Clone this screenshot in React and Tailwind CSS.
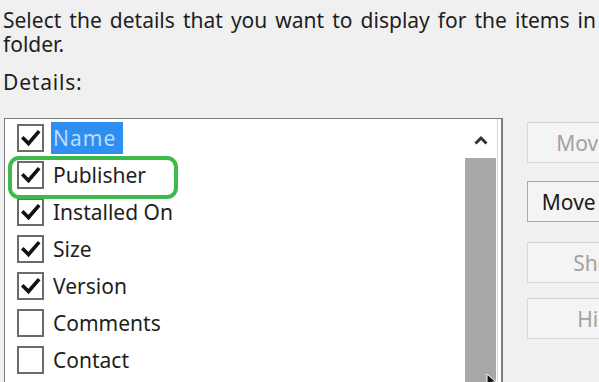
import React from "react";

const items = [
  { label: "Name", checked: true, selected: true },
  { label: "Publisher", checked: true },
  { label: "Installed On", checked: true },
  { label: "Size", checked: true },
  { label: "Version", checked: true },
  { label: "Comments", checked: false },
  { label: "Contact", checked: false },
  { label: "Date", checked: false },
];

function Check({ checked }) {
  return (
    <div className="w-[27px] h-[28px] shrink-0 border-2 border-[#6b6b6b] bg-white flex items-center justify-center">
      {checked && (
        <svg width="20" height="18" viewBox="0 0 20 18">
          <path d="M2.5 9.5 L7.5 14.5 L17 3.5" fill="none" stroke="#111" strokeWidth="3.6" strokeLinecap="square" strokeLinejoin="miter" />
        </svg>
      )}
    </div>
  );
}

function Btn({ label, enabled }) {
  return (
    <div
      className={
        "w-[146px] h-[41px] shrink-0 flex items-center justify-center border bg-[#f4f4f4] " +
        (enabled ? "border-[#a9a9a9] text-[#1b1b1b]" : "border-[#d6d6d6] text-[#a2a2a2]")
      }
    >
      {label}
    </div>
  );
}

export default function App() {
  return (
    <div
      className="w-[599px] h-[382px] overflow-hidden bg-[#f0f0f0] text-[#1e1e1e] text-[21px] leading-[24px]"
      style={{ fontFamily: '"Noto Sans", "Open Sans", sans-serif' }}
    >
      <div className="pl-[3px] pt-[8px] whitespace-nowrap">
        <div className="[word-spacing:2.6px]">Select the details that you want to display for the items in</div>
        <div>folder.</div>
        <div className="mt-[14px] tracking-[0.8px]">Details:</div>
      </div>
      <div className="flex mt-[24px]">
        <div className="ml-[4px] w-[499px] h-[300px] border border-[#7c7c7c] border-r-2 bg-white flex relative shrink-0">
          <div className="flex-1 flex flex-col pl-[12px] pt-0">
            {items.map((it) => (
              <div key={it.label} className="h-[37px] flex items-center shrink-0">
                <Check checked={it.checked} />
                <div
                  className={
                    "ml-[7px] h-[32px] flex items-center " +
                    (it.selected ? "bg-[#2f8ef2] text-[#b9dcff] tracking-[1px] pl-[2px] pr-[7px]" : "px-[2px]")
                  }
                >
                  {it.label}
                </div>
              </div>
            ))}
          </div>
          <div className="w-[34px] flex flex-col border-r border-[#d9d9d9] mr-[3px]">
            <div className="h-[39px] flex items-center justify-center pt-[2px]">
              <svg width="14" height="10" viewBox="0 0 14 10">
                <path d="M1.5 8.5 L7 3 L12.5 8.5" fill="none" stroke="#333" strokeWidth="3" />
              </svg>
            </div>
            <div className="flex-1 bg-[#a8a8a8] mx-[1px]" />
          </div>
          <div className="absolute left-[3px] top-[37px] w-[170px] h-[43px] border-[4px] border-[#3cba4c] rounded-[11px]" />
          <svg className="absolute left-[481px] top-[254px]" width="12" height="16" viewBox="0 0 12 16">
            <path d="M1 1 L1 13 L4 10 L6.5 15 L8.5 14 L6 9 L10 9 Z" fill="#111" stroke="#fff" strokeWidth="1" />
          </svg>
        </div>
        <div className="ml-[24px] flex flex-col shrink-0 pt-[4px]">
          <Btn label="Move Up" enabled={false} />
          <div className="h-[18px]" />
          <Btn label="Move Down" enabled={true} />
          <div className="h-[20px]" />
          <Btn label="Show" enabled={false} />
          <div className="h-[15px]" />
          <Btn label="Hide" enabled={false} />
        </div>
      </div>
    </div>
  );
}
